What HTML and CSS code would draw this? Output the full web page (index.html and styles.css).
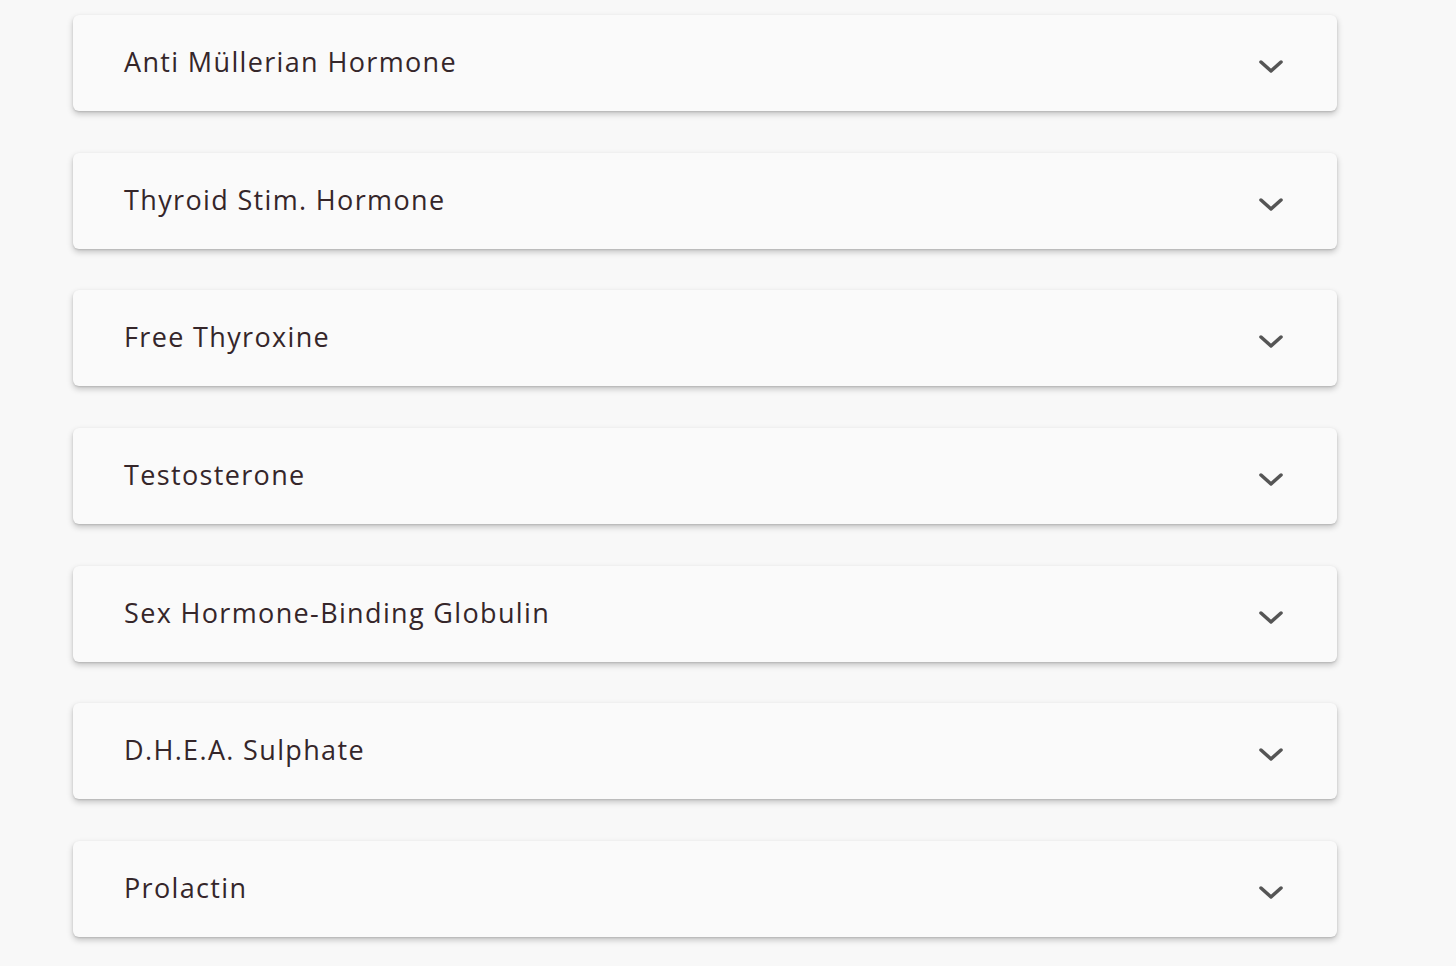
FILE: index.html
```html
<!DOCTYPE html>
<html>
<head>
  <title>Hormone Panel</title>
  <link rel="stylesheet" href="styles.css">
</head>
<body>
  <div class="panel-list">
    <div class="panel-item">
      <span class="panel-title">Anti Müllerian Hormone</span>
      <svg class="chevron" viewBox="0 0 24 14"><path d="M2 2 L12 11 L22 2"/></svg>
    </div>
    <div class="panel-item">
      <span class="panel-title">Thyroid Stim. Hormone</span>
      <svg class="chevron" viewBox="0 0 24 14"><path d="M2 2 L12 11 L22 2"/></svg>
    </div>
    <div class="panel-item">
      <span class="panel-title">Free Thyroxine</span>
      <svg class="chevron" viewBox="0 0 24 14"><path d="M2 2 L12 11 L22 2"/></svg>
    </div>
    <div class="panel-item">
      <span class="panel-title">Testosterone</span>
      <svg class="chevron" viewBox="0 0 24 14"><path d="M2 2 L12 11 L22 2"/></svg>
    </div>
    <div class="panel-item">
      <span class="panel-title">Sex Hormone-Binding Globulin</span>
      <svg class="chevron" viewBox="0 0 24 14"><path d="M2 2 L12 11 L22 2"/></svg>
    </div>
    <div class="panel-item">
      <span class="panel-title">D.H.E.A. Sulphate</span>
      <svg class="chevron" viewBox="0 0 24 14"><path d="M2 2 L12 11 L22 2"/></svg>
    </div>
    <div class="panel-item">
      <span class="panel-title">Prolactin</span>
      <svg class="chevron" viewBox="0 0 24 14"><path d="M2 2 L12 11 L22 2"/></svg>
    </div>
  </div>
</body>
</html>
```
FILE: styles.css
```css
body {
  margin: 0;
  background-color: #f8f8f8;
  font-family: "Open Sans", Lato, sans-serif;
  color: #35262a;
}

.panel-list {
  display: flex;
  flex-direction: column;
  gap: 41.7px;
  width: 1264px;
  padding: 15px 0 20px 73px;
}

.panel-item {
  height: 96px;
  display: flex;
  align-items: center;
  justify-content: space-between;
  padding: 0 54px 0 51px;
  background-color: #fafafa;
  border-radius: 6px;
  box-shadow: 0 3px 6px rgba(0, 0, 0, 0.22), 0 1px 2px rgba(0, 0, 0, 0.12);
  box-sizing: border-box;
}

.panel-title {
  font-size: 27px;
  letter-spacing: 1.35px;
  margin-top: -3px;
}

.chevron {
  width: 24px;
  height: 14px;
  margin-top: 8px;
  fill: none;
  stroke: #555;
  stroke-width: 3.5;
  stroke-linecap: round;
  stroke-linejoin: round;
}
```
